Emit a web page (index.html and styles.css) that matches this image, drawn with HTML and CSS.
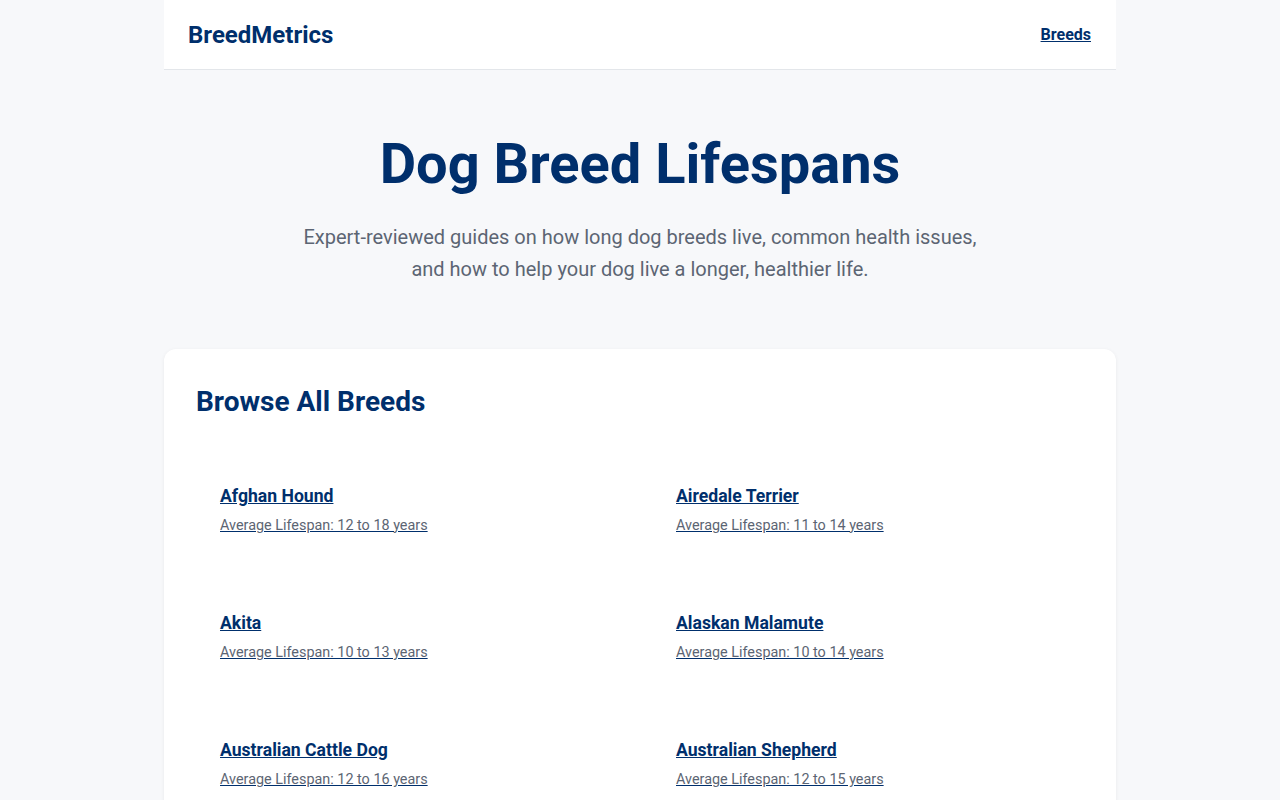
FILE: index.html
```html
<!DOCTYPE html>
<html lang="en">
<head>
<meta charset="utf-8">
<title>Dog Breed Lifespans | BreedMetrics</title>
<link rel="stylesheet" href="styles.css">
</head>
<body>
<div class="container">
  <header class="site-header">
    <a class="logo" href="#">BreedMetrics</a>
    <nav class="nav"><a href="#">Breeds</a></nav>
  </header>

  <section class="hero">
    <h1>Dog Breed Lifespans</h1>
    <p>Expert-reviewed guides on how long dog breeds live, common health issues, and how to help your dog live a longer, healthier life.</p>
  </section>

  <main class="card">
    <h2>Browse All Breeds</h2>
    <div class="breed-grid">
      <a class="breed" href="#"><span class="breed-name">Afghan Hound</span><span class="breed-life">Average Lifespan: 12 to 18 years</span></a>
      <a class="breed" href="#"><span class="breed-name">Airedale Terrier</span><span class="breed-life">Average Lifespan: 11 to 14 years</span></a>
      <a class="breed" href="#"><span class="breed-name">Akita</span><span class="breed-life">Average Lifespan: 10 to 13 years</span></a>
      <a class="breed" href="#"><span class="breed-name">Alaskan Malamute</span><span class="breed-life">Average Lifespan: 10 to 14 years</span></a>
      <a class="breed" href="#"><span class="breed-name">Australian Cattle Dog</span><span class="breed-life">Average Lifespan: 12 to 16 years</span></a>
      <a class="breed" href="#"><span class="breed-name">Australian Shepherd</span><span class="breed-life">Average Lifespan: 12 to 15 years</span></a>
      <a class="breed" href="#"><span class="breed-name">Basenji</span><span class="breed-life">Average Lifespan: 13 to 14 years</span></a>
      <a class="breed" href="#"><span class="breed-name">Basset Hound</span><span class="breed-life">Average Lifespan: 12 to 13 years</span></a>
      <a class="breed" href="#"><span class="breed-name">Beagle</span><span class="breed-life">Average Lifespan: 12 to 15 years</span></a>
      <a class="breed" href="#"><span class="breed-name">Bearded Collie</span><span class="breed-life">Average Lifespan: 12 to 14 years</span></a>
      <a class="breed" href="#"><span class="breed-name">Belgian Malinois</span><span class="breed-life">Average Lifespan: 14 to 16 years</span></a>
      <a class="breed" href="#"><span class="breed-name">Bernese Mountain Dog</span><span class="breed-life">Average Lifespan: 7 to 10 years</span></a>
      <a class="breed" href="#"><span class="breed-name">Bichon Frise</span><span class="breed-life">Average Lifespan: 14 to 15 years</span></a>
      <a class="breed" href="#"><span class="breed-name">Bloodhound</span><span class="breed-life">Average Lifespan: 10 to 12 years</span></a>
      <a class="breed" href="#"><span class="breed-name">Border Collie</span><span class="breed-life">Average Lifespan: 12 to 15 years</span></a>
      <a class="breed" href="#"><span class="breed-name">Border Terrier</span><span class="breed-life">Average Lifespan: 12 to 15 years</span></a>
      <a class="breed" href="#"><span class="breed-name">Boston Terrier</span><span class="breed-life">Average Lifespan: 11 to 13 years</span></a>
      <a class="breed" href="#"><span class="breed-name">Boxer</span><span class="breed-life">Average Lifespan: 10 to 12 years</span></a>
      <a class="breed" href="#"><span class="breed-name">Brittany</span><span class="breed-life">Average Lifespan: 12 to 14 years</span></a>
      <a class="breed" href="#"><span class="breed-name">Bull Terrier</span><span class="breed-life">Average Lifespan: 12 to 13 years</span></a>
      <a class="breed" href="#"><span class="breed-name">Bulldog</span><span class="breed-life">Average Lifespan: 8 to 10 years</span></a>
      <a class="breed" href="#"><span class="breed-name">Bullmastiff</span><span class="breed-life">Average Lifespan: 7 to 9 years</span></a>
      <a class="breed" href="#"><span class="breed-name">Cairn Terrier</span><span class="breed-life">Average Lifespan: 13 to 15 years</span></a>
      <a class="breed" href="#"><span class="breed-name">Cane Corso</span><span class="breed-life">Average Lifespan: 9 to 12 years</span></a>
      <a class="breed" href="#"><span class="breed-name">Cavalier King Charles Spaniel</span><span class="breed-life">Average Lifespan: 12 to 15 years</span></a>
      <a class="breed" href="#"><span class="breed-name">Chesapeake Bay Retriever</span><span class="breed-life">Average Lifespan: 10 to 13 years</span></a>
      <a class="breed" href="#"><span class="breed-name">Chihuahua</span><span class="breed-life">Average Lifespan: 14 to 16 years</span></a>
      <a class="breed" href="#"><span class="breed-name">Chinese Crested</span><span class="breed-life">Average Lifespan: 13 to 18 years</span></a>
      <a class="breed" href="#"><span class="breed-name">Chinese Shar-Pei</span><span class="breed-life">Average Lifespan: 8 to 12 years</span></a>
      <a class="breed" href="#"><span class="breed-name">Chow Chow</span><span class="breed-life">Average Lifespan: 8 to 12 years</span></a>
      <a class="breed" href="#"><span class="breed-name">Cocker Spaniel</span><span class="breed-life">Average Lifespan: 10 to 14 years</span></a>
      <a class="breed" href="#"><span class="breed-name">Collie</span><span class="breed-life">Average Lifespan: 12 to 14 years</span></a>
      <a class="breed" href="#"><span class="breed-name">Dachshund</span><span class="breed-life">Average Lifespan: 12 to 16 years</span></a>
      <a class="breed" href="#"><span class="breed-name">Dalmatian</span><span class="breed-life">Average Lifespan: 11 to 13 years</span></a>
      <a class="breed" href="#"><span class="breed-name">Doberman Pinscher</span><span class="breed-life">Average Lifespan: 10 to 12 years</span></a>
      <a class="breed" href="#"><span class="breed-name">English Setter</span><span class="breed-life">Average Lifespan: 12 to 13 years</span></a>
      <a class="breed" href="#"><span class="breed-name">English Springer Spaniel</span><span class="breed-life">Average Lifespan: 12 to 14 years</span></a>
      <a class="breed" href="#"><span class="breed-name">Flat-Coated Retriever</span><span class="breed-life">Average Lifespan: 8 to 10 years</span></a>
      <a class="breed" href="#"><span class="breed-name">French Bulldog</span><span class="breed-life">Average Lifespan: 10 to 12 years</span></a>
      <a class="breed" href="#"><span class="breed-name">German Shepherd</span><span class="breed-life">Average Lifespan: 7 to 10 years</span></a>
      <a class="breed" href="#"><span class="breed-name">German Shorthaired Pointer</span><span class="breed-life">Average Lifespan: 10 to 12 years</span></a>
      <a class="breed" href="#"><span class="breed-name">Giant Schnauzer</span><span class="breed-life">Average Lifespan: 12 to 15 years</span></a>
      <a class="breed" href="#"><span class="breed-name">Golden Retriever</span><span class="breed-life">Average Lifespan: 10 to 12 years</span></a>
      <a class="breed" href="#"><span class="breed-name">Great Dane</span><span class="breed-life">Average Lifespan: 7 to 10 years</span></a>
      <a class="breed" href="#"><span class="breed-name">Great Pyrenees</span><span class="breed-life">Average Lifespan: 10 to 12 years</span></a>
      <a class="breed" href="#"><span class="breed-name">Greyhound</span><span class="breed-life">Average Lifespan: 10 to 13 years</span></a>
      <a class="breed" href="#"><span class="breed-name">Havanese</span><span class="breed-life">Average Lifespan: 14 to 16 years</span></a>
      <a class="breed" href="#"><span class="breed-name">Irish Setter</span><span class="breed-life">Average Lifespan: 12 to 15 years</span></a>
      <a class="breed" href="#"><span class="breed-name">Irish Wolfhound</span><span class="breed-life">Average Lifespan: 6 to 8 years</span></a>
      <a class="breed" href="#"><span class="breed-name">Italian Greyhound</span><span class="breed-life">Average Lifespan: 14 to 15 years</span></a>
      <a class="breed" href="#"><span class="breed-name">Jack Russell Terrier</span><span class="breed-life">Average Lifespan: 13 to 16 years</span></a>
      <a class="breed" href="#"><span class="breed-name">Keeshond</span><span class="breed-life">Average Lifespan: 12 to 15 years</span></a>
      <a class="breed" href="#"><span class="breed-name">Labrador Retriever</span><span class="breed-life">Average Lifespan: 11 to 13 years</span></a>
      <a class="breed" href="#"><span class="breed-name">Leonberger</span><span class="breed-life">Average Lifespan: 7 to 9 years</span></a>
      <a class="breed" href="#"><span class="breed-name">Lhasa Apso</span><span class="breed-life">Average Lifespan: 12 to 15 years</span></a>
      <a class="breed" href="#"><span class="breed-name">Maltese</span><span class="breed-life">Average Lifespan: 12 to 15 years</span></a>
      <a class="breed" href="#"><span class="breed-name">Mastiff</span><span class="breed-life">Average Lifespan: 6 to 10 years</span></a>
      <a class="breed" href="#"><span class="breed-name">Miniature Pinscher</span><span class="breed-life">Average Lifespan: 12 to 16 years</span></a>
      <a class="breed" href="#"><span class="breed-name">Miniature Schnauzer</span><span class="breed-life">Average Lifespan: 12 to 15 years</span></a>
      <a class="breed" href="#"><span class="breed-name">Newfoundland</span><span class="breed-life">Average Lifespan: 9 to 10 years</span></a>
      <a class="breed" href="#"><span class="breed-name">Norwegian Elkhound</span><span class="breed-life">Average Lifespan: 12 to 15 years</span></a>
      <a class="breed" href="#"><span class="breed-name">Old English Sheepdog</span><span class="breed-life">Average Lifespan: 10 to 12 years</span></a>
      <a class="breed" href="#"><span class="breed-name">Papillon</span><span class="breed-life">Average Lifespan: 14 to 16 years</span></a>
      <a class="breed" href="#"><span class="breed-name">Pekingese</span><span class="breed-life">Average Lifespan: 12 to 14 years</span></a>
      <a class="breed" href="#"><span class="breed-name">Pembroke Welsh Corgi</span><span class="breed-life">Average Lifespan: 12 to 13 years</span></a>
      <a class="breed" href="#"><span class="breed-name">Pomeranian</span><span class="breed-life">Average Lifespan: 12 to 16 years</span></a>
      <a class="breed" href="#"><span class="breed-name">Poodle</span><span class="breed-life">Average Lifespan: 10 to 18 years</span></a>
      <a class="breed" href="#"><span class="breed-name">Portuguese Water Dog</span><span class="breed-life">Average Lifespan: 11 to 13 years</span></a>
      <a class="breed" href="#"><span class="breed-name">Pug</span><span class="breed-life">Average Lifespan: 13 to 15 years</span></a>
      <a class="breed" href="#"><span class="breed-name">Rhodesian Ridgeback</span><span class="breed-life">Average Lifespan: 10 to 12 years</span></a>
      <a class="breed" href="#"><span class="breed-name">Rottweiler</span><span class="breed-life">Average Lifespan: 9 to 10 years</span></a>
      <a class="breed" href="#"><span class="breed-name">Saint Bernard</span><span class="breed-life">Average Lifespan: 8 to 10 years</span></a>
      <a class="breed" href="#"><span class="breed-name">Samoyed</span><span class="breed-life">Average Lifespan: 12 to 14 years</span></a>
      <a class="breed" href="#"><span class="breed-name">Scottish Terrier</span><span class="breed-life">Average Lifespan: 12 to 15 years</span></a>
      <a class="breed" href="#"><span class="breed-name">Shetland Sheepdog</span><span class="breed-life">Average Lifespan: 12 to 14 years</span></a>
      <a class="breed" href="#"><span class="breed-name">Shiba Inu</span><span class="breed-life">Average Lifespan: 13 to 16 years</span></a>
      <a class="breed" href="#"><span class="breed-name">Shih Tzu</span><span class="breed-life">Average Lifespan: 10 to 18 years</span></a>
      <a class="breed" href="#"><span class="breed-name">Siberian Husky</span><span class="breed-life">Average Lifespan: 12 to 14 years</span></a>
      <a class="breed" href="#"><span class="breed-name">Soft Coated Wheaten Terrier</span><span class="breed-life">Average Lifespan: 12 to 14 years</span></a>
      <a class="breed" href="#"><span class="breed-name">Staffordshire Bull Terrier</span><span class="breed-life">Average Lifespan: 12 to 14 years</span></a>
      <a class="breed" href="#"><span class="breed-name">Vizsla</span><span class="breed-life">Average Lifespan: 12 to 14 years</span></a>
      <a class="breed" href="#"><span class="breed-name">Weimaraner</span><span class="breed-life">Average Lifespan: 10 to 13 years</span></a>
      <a class="breed" href="#"><span class="breed-name">West Highland White Terrier</span><span class="breed-life">Average Lifespan: 13 to 15 years</span></a>
      <a class="breed" href="#"><span class="breed-name">Whippet</span><span class="breed-life">Average Lifespan: 12 to 15 years</span></a>
      <a class="breed" href="#"><span class="breed-name">Yorkshire Terrier</span><span class="breed-life">Average Lifespan: 11 to 15 years</span></a>
    </div>
  </main>
</div>
</body>
</html>
```

FILE: styles.css
```css
* { box-sizing: border-box; }

html, body {
  margin: 0;
  padding: 0;
}

body {
  background: #f7f8fa;
  font-family: Roboto, "Liberation Sans", Arial, sans-serif;
  color: #1f2937;
}

.container {
  max-width: 952px;
  margin: 0 auto;
}

.site-header {
  height: 70px;
  background: #fff;
  border-bottom: 1px solid #e3e6ea;
  display: flex;
  align-items: center;
  justify-content: space-between;
  padding: 0 25px 0 24px;
}

.logo {
  font-size: 24px;
  font-weight: 700;
  color: #002f6c;
  text-decoration: none;
}

.nav a {
  font-size: 16px;
  font-weight: 700;
  color: #002f6c;
  text-decoration: underline;
}

.hero {
  text-align: center;
  padding: 64px 24px 64px;
}

.hero h1 {
  margin: 0 0 25px;
  font-size: 56px;
  line-height: 1.1;
  font-weight: 700;
  color: #002f6c;
}

.hero p {
  margin: 0 auto;
  max-width: 700px;
  font-size: 20px;
  line-height: 32px;
  color: #5c6573;
}

.card {
  display: block;
  background: #fff;
  border-radius: 12px;
  box-shadow: 0 1px 4px rgba(15, 23, 42, 0.06);
  padding: 32px;
  margin-bottom: 64px;
}

.card h2 {
  margin: 0 0 36.5px;
  font-size: 28px;
  line-height: 42px;
  font-weight: 700;
  color: #002f6c;
}

.breed-grid {
  display: grid;
  grid-template-columns: 1fr 1fr;
  column-gap: 24px;
  row-gap: 25px;
}

.breed {
  display: flex;
  flex-direction: column;
  gap: 6px;
  padding: 25px 24px;
  color: #002f6c;
  text-decoration: underline;
}

.breed-name {
  font-size: 17.6px;
  line-height: 24.6px;
  font-weight: 700;
}

.breed-life {
  font-size: 14.4px;
  line-height: 21.6px;
  color: #5c6573;
}
```
